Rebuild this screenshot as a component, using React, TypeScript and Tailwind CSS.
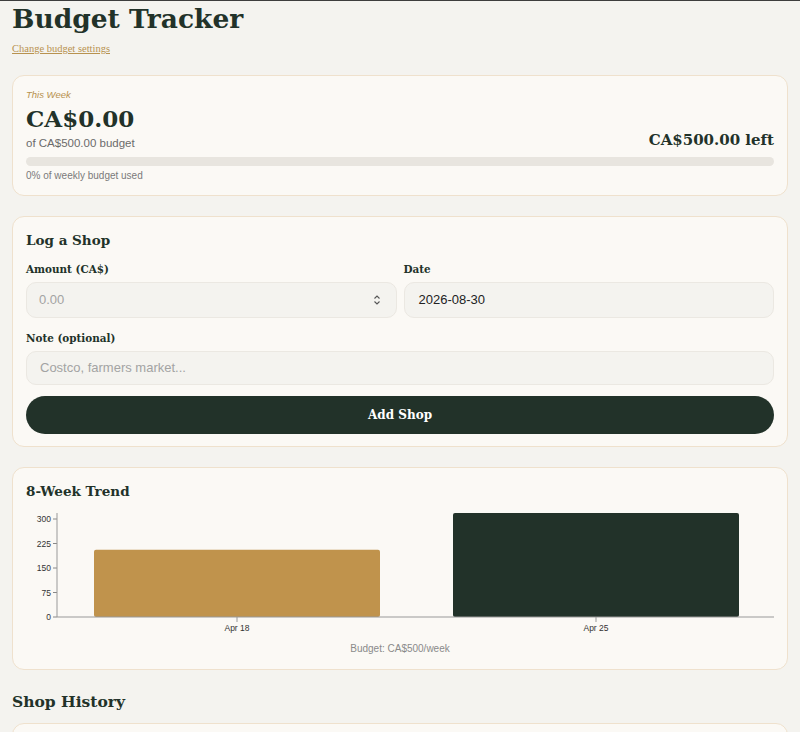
import React from "react";

const serif = { fontFamily: '"DejaVu Serif", Georgia, serif' };

function Chart() {
  const x0 = 31;
  const y0 = 114;
  const h = 98;
  const yOf = (v: number) => y0 - (v / 300) * h;
  const ticks = [0, 75, 150, 225, 300];
  const font = '"Liberation Sans", Arial, sans-serif';
  return (
    <svg width="748" height="130" viewBox="0 0 748 130" className="block">
      {ticks.map((t) => (
        <g key={t}>
          <line x1={x0 - 4} x2={x0} y1={yOf(t)} y2={yOf(t)} stroke="#888" strokeWidth="1" />
          <text x={x0 - 6} y={yOf(t) + 3} textAnchor="end" fontSize="8.5" fill="#333" fontFamily={font}>
            {t}
          </text>
        </g>
      ))}
      <rect x={68} y={yOf(206)} width={286} height={y0 - yOf(206)} rx="2" fill="#c0934c" />
      <rect x={427} y={yOf(318)} width={286} height={y0 - yOf(318)} rx="2" fill="#223229" />
      <line x1={x0} x2={x0} y1={10} y2={y0} stroke="#999" strokeWidth="1" />
      <line x1={x0} x2={749} y1={y0} y2={y0} stroke="#999" strokeWidth="1" />
      <line x1={211} x2={211} y1={y0} y2={y0 + 5} stroke="#999" />
      <line x1={570} x2={570} y1={y0} y2={y0 + 5} stroke="#999" />
      <text x={211} y={y0 + 14} textAnchor="middle" fontSize="8.5" fill="#333" fontFamily={font}>Apr 18</text>
      <text x={570} y={y0 + 14} textAnchor="middle" fontSize="8.5" fill="#333" fontFamily={font}>Apr 25</text>
    </svg>
  );
}

export default function App() {
  return (
    <div className="h-[732px] overflow-hidden bg-[#f4f3ef] border-t border-[#3d3d3d] px-3 text-[#223229]" style={{ fontFamily: '"Liberation Sans", Arial, sans-serif' }}>
      <h1 className="mt-[3px] text-[26.5px] font-bold leading-[30px]" style={serif}>Budget Tracker</h1>
      <div className="mt-[7px] leading-[12px]">
        <a className="text-[10.5px] text-[#b8924f] underline" style={{ fontFamily: '"Liberation Serif", Georgia, serif' }}>Change budget settings</a>
      </div>

      <div className="mt-[20px] rounded-xl border border-[#efe1cd] bg-[#fbf9f5] px-[13px] pt-[13px] pb-[13px]">
        <div className="text-[9.5px] italic text-[#b8924f] leading-[12px]">This Week</div>
        <div className="flex items-end justify-between">
          <div>
            <div className="text-[23px] font-bold leading-[30px] mt-[3px]" style={serif}>CA$0.00</div>
            <div className="mt-[2px] text-[11.5px] text-[#6b6b6b] leading-[14px]">of CA$500.00 budget</div>
          </div>
          <div className="text-[15px] font-bold leading-[18px] mb-[1px]" style={serif}>CA$500.00 left</div>
        </div>
        <div className="mt-[7px] h-[9px] rounded-full bg-[#e8e5df]" />
        <div className="mt-[4px] text-[10px] text-[#7a7a7a] leading-[12px]">0% of weekly budget used</div>
      </div>

      <div className="mt-[20px] rounded-xl border border-[#efe1cd] bg-[#fbf9f5] px-[13px] pt-[13px] pb-[12px]">
        <h2 className="text-[13.5px] font-bold leading-[20px]" style={serif}>Log a Shop</h2>
        <div className="mt-[12px] grid grid-cols-2 gap-[7px]">
          <div>
            <label className="block text-[10.4px] font-bold leading-[14px] mb-[6px]" style={serif}>Amount (CA$)</label>
            <div className="h-[36px] rounded-[10px] border border-[#ebe8e2] bg-[#f4f3ef] flex items-center justify-between pl-[12px] pr-[15px]">
              <span className="text-[13px] text-[#a3a3a3]">0.00</span>
              <svg width="8" height="12" viewBox="0 0 8 12"><path d="M1.5 4.5 L4 2 L6.5 4.5 M1.5 7.5 L4 10 L6.5 7.5" stroke="#555" strokeWidth="1.1" fill="none" /></svg>
            </div>
          </div>
          <div>
            <label className="block text-[10.4px] font-bold leading-[14px] mb-[6px]" style={serif}>Date</label>
            <div className="h-[36px] rounded-[10px] border border-[#ebe8e2] bg-[#f4f3ef] flex items-center px-[14px]">
              <span className="text-[13px] text-[#222]">2026-08-30</span>
            </div>
          </div>
        </div>
        <label className="mt-[13px] block text-[10.4px] font-bold leading-[14px] mb-[6px]" style={serif}>Note (optional)</label>
        <div className="h-[34px] rounded-[10px] border border-[#ebe8e2] bg-[#f4f3ef] flex items-center px-[13px]">
          <span className="text-[13px] text-[#a3a3a3]">Costco, farmers market...</span>
        </div>
        <button className="mt-[11px] w-full h-[38px] rounded-full bg-[#223229] text-white text-[12px] font-bold" style={serif}>Add Shop</button>
      </div>

      <div className="mt-[20px] rounded-xl border border-[#efe1cd] bg-[#fbf9f5] px-[13px] pt-[13px] pb-[14px]">
        <h2 className="text-[13.5px] font-bold leading-[20px]" style={serif}>8-Week Trend</h2>
        <div className="mt-[2px]"><Chart /></div>
        <div className="mt-[10px] text-center text-[10px] text-[#8a8a8a] leading-[12px]">Budget: CA$500/week</div>
      </div>

      <h2 className="mt-[21px] text-[15.5px] font-bold leading-[22px]" style={serif}>Shop History</h2>
      <div className="mt-[10px] h-[40px] rounded-xl border border-[#efe1cd] bg-[#fbf9f5]" />
    </div>
  );
}
